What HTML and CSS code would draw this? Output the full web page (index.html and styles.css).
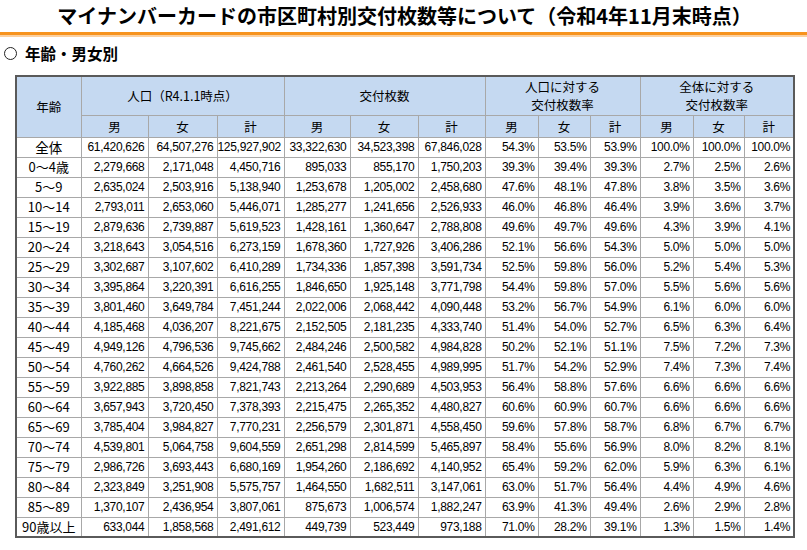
FILE: index.html
```html
<!DOCTYPE html>
<html lang="ja">
<head>
<meta charset="utf-8">
<link rel="stylesheet" href="styles.css">
</head>
<body>
<div class="title">マイナンバーカードの市区町村別交付枚数等について（令和4年11月末時点）</div>
<div class="rule"></div>
<div class="sub"><span class="circ"></span>年齢・男女別</div>
<table class="tbl">
<colgroup>
<col class="c0"><col class="c1"><col class="c2"><col class="c3"><col class="c4"><col class="c5"><col class="c6"><col class="c7"><col class="c8"><col class="c9"><col class="c10"><col class="c11"><col class="c12">
</colgroup>
<thead>
<tr class="h1">
<th rowspan="2">年齢</th>
<th colspan="3">人口（R4.1.1時点）</th>
<th colspan="3">交付枚数</th>
<th colspan="3" class="two">人口に対する<br>交付枚数率</th>
<th colspan="3" class="two">全体に対する<br>交付枚数率</th>
</tr>
<tr class="h2">
<th>男</th><th>女</th><th>計</th>
<th>男</th><th>女</th><th>計</th>
<th>男</th><th>女</th><th>計</th>
<th>男</th><th>女</th><th>計</th>
</tr>
</thead>
<tbody>
<tr><th class="big">全体</th><td>61,420,626</td><td>64,507,276</td><td>125,927,902</td><td>33,322,630</td><td>34,523,398</td><td>67,846,028</td><td>54.3%</td><td>53.5%</td><td>53.9%</td><td>100.0%</td><td>100.0%</td><td>100.0%</td></tr>
<tr><th>0～4歳</th><td>2,279,668</td><td>2,171,048</td><td>4,450,716</td><td>895,033</td><td>855,170</td><td>1,750,203</td><td>39.3%</td><td>39.4%</td><td>39.3%</td><td>2.7%</td><td>2.5%</td><td>2.6%</td></tr>
<tr><th>5～9</th><td>2,635,024</td><td>2,503,916</td><td>5,138,940</td><td>1,253,678</td><td>1,205,002</td><td>2,458,680</td><td>47.6%</td><td>48.1%</td><td>47.8%</td><td>3.8%</td><td>3.5%</td><td>3.6%</td></tr>
<tr><th>10～14</th><td>2,793,011</td><td>2,653,060</td><td>5,446,071</td><td>1,285,277</td><td>1,241,656</td><td>2,526,933</td><td>46.0%</td><td>46.8%</td><td>46.4%</td><td>3.9%</td><td>3.6%</td><td>3.7%</td></tr>
<tr><th>15～19</th><td>2,879,636</td><td>2,739,887</td><td>5,619,523</td><td>1,428,161</td><td>1,360,647</td><td>2,788,808</td><td>49.6%</td><td>49.7%</td><td>49.6%</td><td>4.3%</td><td>3.9%</td><td>4.1%</td></tr>
<tr><th>20～24</th><td>3,218,643</td><td>3,054,516</td><td>6,273,159</td><td>1,678,360</td><td>1,727,926</td><td>3,406,286</td><td>52.1%</td><td>56.6%</td><td>54.3%</td><td>5.0%</td><td>5.0%</td><td>5.0%</td></tr>
<tr><th>25～29</th><td>3,302,687</td><td>3,107,602</td><td>6,410,289</td><td>1,734,336</td><td>1,857,398</td><td>3,591,734</td><td>52.5%</td><td>59.8%</td><td>56.0%</td><td>5.2%</td><td>5.4%</td><td>5.3%</td></tr>
<tr><th>30～34</th><td>3,395,864</td><td>3,220,391</td><td>6,616,255</td><td>1,846,650</td><td>1,925,148</td><td>3,771,798</td><td>54.4%</td><td>59.8%</td><td>57.0%</td><td>5.5%</td><td>5.6%</td><td>5.6%</td></tr>
<tr><th>35～39</th><td>3,801,460</td><td>3,649,784</td><td>7,451,244</td><td>2,022,006</td><td>2,068,442</td><td>4,090,448</td><td>53.2%</td><td>56.7%</td><td>54.9%</td><td>6.1%</td><td>6.0%</td><td>6.0%</td></tr>
<tr><th>40～44</th><td>4,185,468</td><td>4,036,207</td><td>8,221,675</td><td>2,152,505</td><td>2,181,235</td><td>4,333,740</td><td>51.4%</td><td>54.0%</td><td>52.7%</td><td>6.5%</td><td>6.3%</td><td>6.4%</td></tr>
<tr><th>45～49</th><td>4,949,126</td><td>4,796,536</td><td>9,745,662</td><td>2,484,246</td><td>2,500,582</td><td>4,984,828</td><td>50.2%</td><td>52.1%</td><td>51.1%</td><td>7.5%</td><td>7.2%</td><td>7.3%</td></tr>
<tr><th>50～54</th><td>4,760,262</td><td>4,664,526</td><td>9,424,788</td><td>2,461,540</td><td>2,528,455</td><td>4,989,995</td><td>51.7%</td><td>54.2%</td><td>52.9%</td><td>7.4%</td><td>7.3%</td><td>7.4%</td></tr>
<tr><th>55～59</th><td>3,922,885</td><td>3,898,858</td><td>7,821,743</td><td>2,213,264</td><td>2,290,689</td><td>4,503,953</td><td>56.4%</td><td>58.8%</td><td>57.6%</td><td>6.6%</td><td>6.6%</td><td>6.6%</td></tr>
<tr><th>60～64</th><td>3,657,943</td><td>3,720,450</td><td>7,378,393</td><td>2,215,475</td><td>2,265,352</td><td>4,480,827</td><td>60.6%</td><td>60.9%</td><td>60.7%</td><td>6.6%</td><td>6.6%</td><td>6.6%</td></tr>
<tr><th>65～69</th><td>3,785,404</td><td>3,984,827</td><td>7,770,231</td><td>2,256,579</td><td>2,301,871</td><td>4,558,450</td><td>59.6%</td><td>57.8%</td><td>58.7%</td><td>6.8%</td><td>6.7%</td><td>6.7%</td></tr>
<tr><th>70～74</th><td>4,539,801</td><td>5,064,758</td><td>9,604,559</td><td>2,651,298</td><td>2,814,599</td><td>5,465,897</td><td>58.4%</td><td>55.6%</td><td>56.9%</td><td>8.0%</td><td>8.2%</td><td>8.1%</td></tr>
<tr><th>75～79</th><td>2,986,726</td><td>3,693,443</td><td>6,680,169</td><td>1,954,260</td><td>2,186,692</td><td>4,140,952</td><td>65.4%</td><td>59.2%</td><td>62.0%</td><td>5.9%</td><td>6.3%</td><td>6.1%</td></tr>
<tr><th>80～84</th><td>2,323,849</td><td>3,251,908</td><td>5,575,757</td><td>1,464,550</td><td>1,682,511</td><td>3,147,061</td><td>63.0%</td><td>51.7%</td><td>56.4%</td><td>4.4%</td><td>4.9%</td><td>4.6%</td></tr>
<tr><th>85～89</th><td>1,370,107</td><td>2,436,954</td><td>3,807,061</td><td>875,673</td><td>1,006,574</td><td>1,882,247</td><td>63.9%</td><td>41.3%</td><td>49.4%</td><td>2.6%</td><td>2.9%</td><td>2.8%</td></tr>
<tr><th>90歳以上</th><td>633,044</td><td>1,858,568</td><td>2,491,612</td><td>449,739</td><td>523,449</td><td>973,188</td><td>71.0%</td><td>28.2%</td><td>39.1%</td><td>1.3%</td><td>1.5%</td><td>1.4%</td></tr>
</tbody>
</table>
</body>
</html>
```
FILE: styles.css
```css
html, body {
  margin: 0;
  padding: 0;
  background: #ffffff;
}
body {
  font-family: "Noto Sans CJK JP", "Noto Sans", sans-serif;
  color: #000;
}
.title {
  height: 32px;
  display: flex;
  align-items: center;
  justify-content: center;
  font-size: 20px;
  font-weight: 700;
  line-height: 1;
  padding-left: 2px;
}
.rule {
  height: 3px;
  background: #f7931e;
  border-bottom: 2px solid #fbd0a0;
}
.sub {
  display: flex;
  align-items: center;
  height: 20px;
  margin-top: 6px;
  margin-bottom: 12px;
  padding-left: 4px;
  font-size: 15.5px;
  font-weight: 700;
  line-height: 20px;
}
.circ {
  box-sizing: border-box;
  width: 13px;
  height: 13px;
  border: 1px solid #222;
  border-radius: 50%;
  margin-right: 8px;
}
.tbl {
  margin-left: 15px;
  border-collapse: collapse;
  table-layout: fixed;
  width: 778px;
  border: 2px solid #5a5a5a;
}
.c0 { width: 65px; }
.c1 { width: 67px; }
.c2 { width: 69px; }
.c3 { width: 67px; }
.c4 { width: 66px; }
.c5 { width: 68px; }
.c6 { width: 67px; }
.c7 { width: 53px; }
.c8 { width: 52px; }
.c9 { width: 50px; }
.c10 { width: 53px; }
.c11 { width: 51px; }
.c12 { width: 50px; }
.tbl th, .tbl td {
  border: 1px solid #a8a8a8;
  padding: 0;
}
.tbl thead th {
  background: #c5d9f1;
  font-weight: 400;
  font-size: 12.5px;
  text-align: center;
  vertical-align: middle;
  line-height: 17px;
}
.tbl thead th.two {
  line-height: 18px;
}
.h1 { height: 39px; }
.h2 { height: 22px; }
.h2 th { font-size: 13px; }
.tbl tbody tr { height: 20px; }
.tbl tbody th {
  font-weight: 400;
  font-size: 13px;
  text-align: center;
  line-height: 18px;
}
.tbl tbody th.big { font-size: 13.5px; }
.tbl td {
  font-family: "Liberation Sans", Arial, sans-serif;
  font-size: 12px;
  letter-spacing: -0.3px;
  text-align: right;
  padding-right: 3px;
  line-height: 18px;
}
```
